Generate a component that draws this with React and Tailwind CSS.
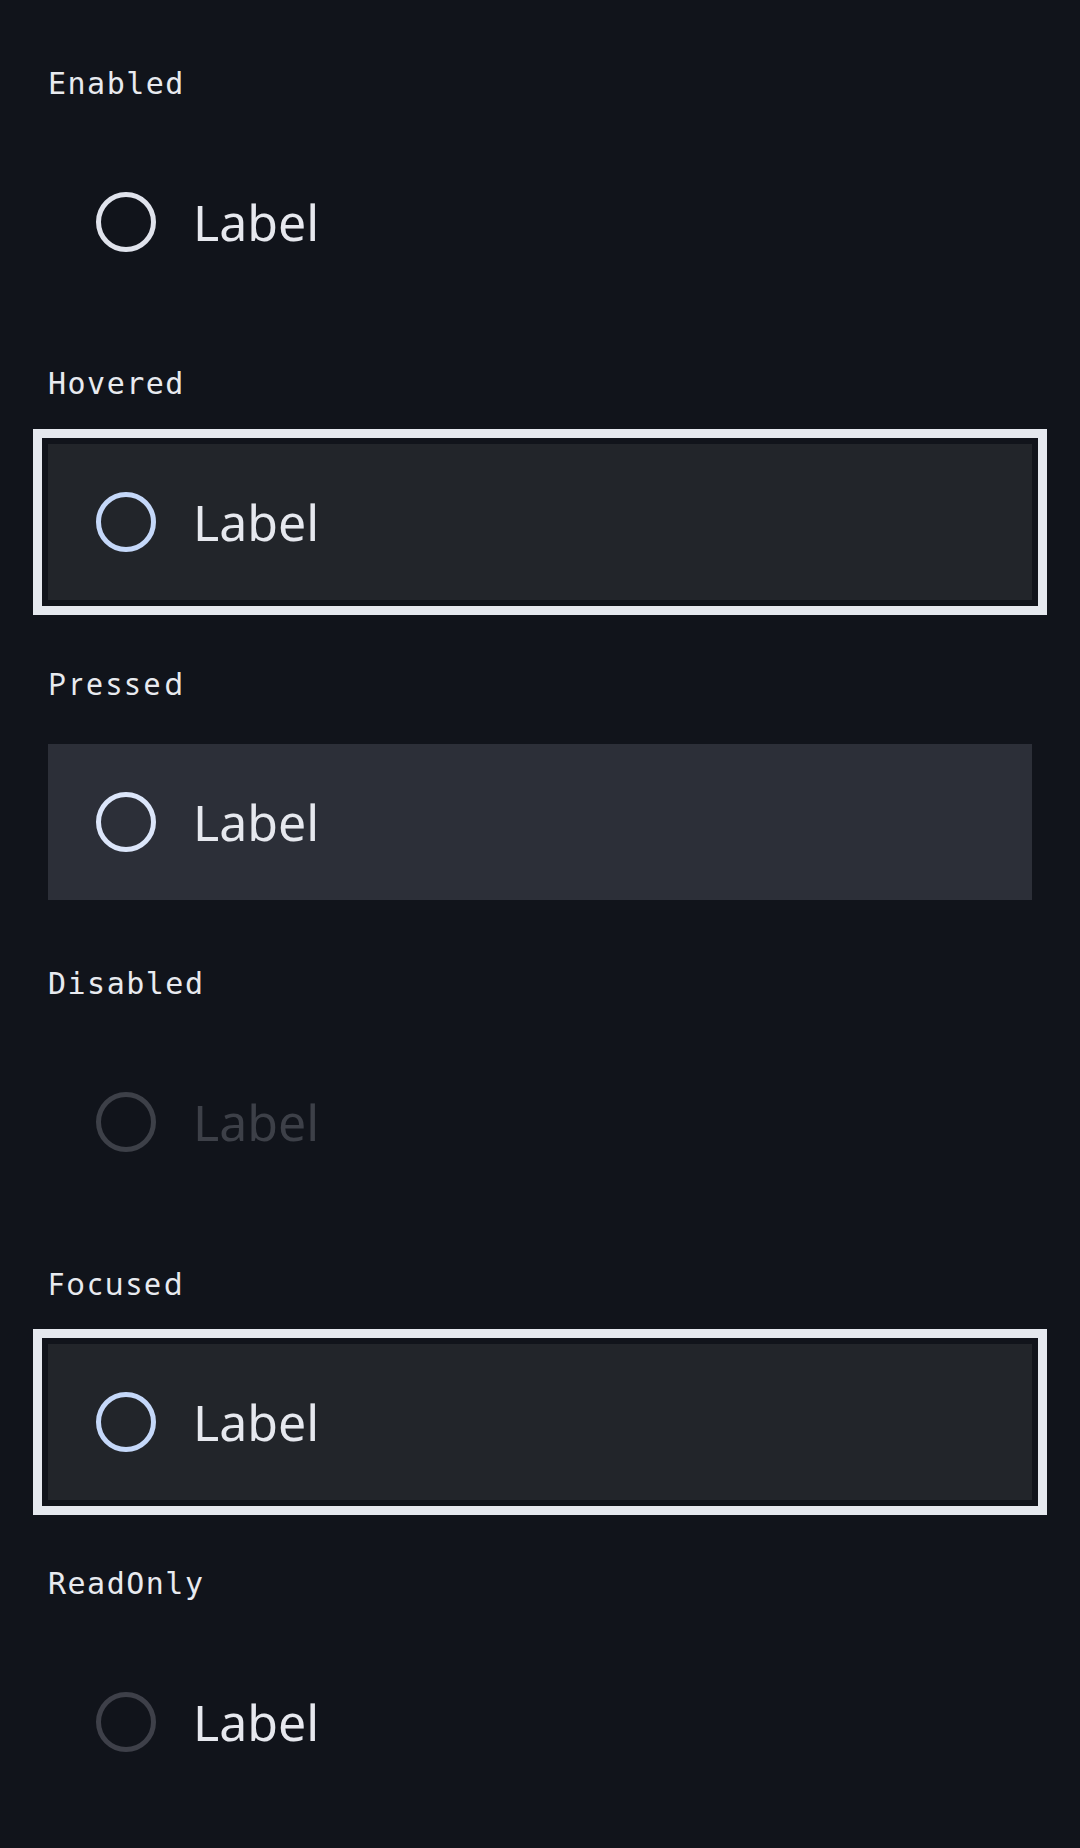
import React from "react";

const mono = "font-['DejaVu_Sans_Mono',monospace] tracking-[1.5px]";

const rows = [
  { title: "Enabled", font: mono, box: "", ring: "border-[#e0e3ec]", text: "text-[#e6e8ee]" },
  { title: "Hovered", font: mono, box: "bg-[#22252a] outline-solid outline-[9px] outline-offset-[6px] outline-[#e6e9ef]", ring: "border-[#c5d8f9]", text: "text-[#e6e8ee]" },
  { title: "Pressed", font: "font-['Noto_Sans',sans-serif] tracking-[4px]", box: "bg-[#2c2f38]", ring: "border-[#dce6fa]", text: "text-[#e6e8ee]" },
  { title: "Disabled", font: mono, box: "", ring: "border-[#3d4048]", text: "text-[#3d4048]" },
  { title: "Focused", font: "font-['Noto_Sans',sans-serif] tracking-[3px]", box: "bg-[#22252a] outline-solid outline-[9px] outline-offset-[6px] outline-[#e6e9ef]", ring: "border-[#c5d8f9]", text: "text-[#e6e8ee]" },
  { title: "ReadOnly", font: mono, box: "", ring: "border-[#3e4049]", text: "text-[#e6e8ee]" },
];

const RadioRow = ({ title, font, box, ring, text }) => {
  return (
    <div className="flex flex-col">
      <div className={`h-[36px] leading-[36px] text-[30px] text-[#e8eaef] mb-[42px] ${font}`}>
        {title}
      </div>
      <div className={`h-[156px] flex items-center pl-[48px] ${box}`}>
        <span className={`w-[60px] h-[60px] rounded-full border-[5px] shrink-0 ${ring}`} />
        <span className={`ml-[37px] text-[50px] leading-none font-['Noto_Sans',sans-serif] ${text}`}>
          Label
        </span>
      </div>
    </div>
  );
};

export default function App() {
  return (
    <div className="min-h-screen bg-[#11141b] pt-[66px] px-[48px] flex flex-col gap-[66px]">
      {rows.map((r) => (
        <RadioRow key={r.title} {...r} />
      ))}
    </div>
  );
}
